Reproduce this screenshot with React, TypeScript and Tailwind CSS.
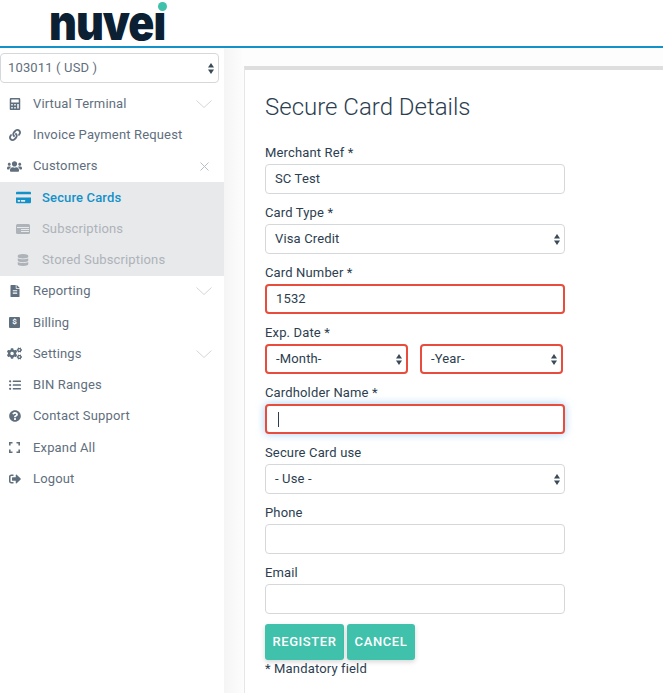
import { ReactNode } from "react";
import {
  FaCalculator,
  FaLink,
  FaUsers,
  FaCreditCard,
  FaDatabase,
  FaFileAlt,
  FaCogs,
  FaQuestionCircle,
  FaSignOutAlt,
  FaListUl,
} from "react-icons/fa";

function Chevron() {
  return (
    <svg width="16" height="8" viewBox="0 0 16 8" fill="none" stroke="#d3d6d9" strokeWidth="1">
      <path d="M0.5 0.5L8 7.5L15.5 0.5" />
    </svg>
  );
}

function Close() {
  return (
    <svg width="9" height="9" viewBox="0 0 9 9" fill="none" stroke="#b9bec3" strokeWidth="1">
      <path d="M0.5 0.5L8.5 8.5M8.5 0.5L0.5 8.5" />
    </svg>
  );
}

function Arrows() {
  return (
    <svg width="6" height="11" viewBox="0 0 6 11" fill="#3a4a58">
      <path d="M3 0L6 4.5H0Z" />
      <path d="M3 11L0 6.5H6Z" />
    </svg>
  );
}

function BillingIcon() {
  return (
    <span className="flex h-[11px] w-[11px] items-center justify-center rounded-[1px] bg-[#5f6f7e] text-[8px] font-bold leading-none text-white">
      $
    </span>
  );
}

function ExpandIcon() {
  return (
    <svg width="11" height="11" viewBox="0 0 11 11" fill="none" stroke="#5f6f7e" strokeWidth="1.6">
      <path d="M0.8 3.5V0.8H3.5M7.5 0.8H10.2V3.5M10.2 7.5V10.2H7.5M3.5 10.2H0.8V7.5" />
    </svg>
  );
}

function SubscriptionsIcon() {
  return (
    <svg width="14" height="10" viewBox="0 0 14 10">
      <rect width="14" height="10" rx="1.5" fill="#adb3b9" />
      <path d="M1 3.5H13M5 5.5H13M5 7.5H13" stroke="#e8e9eb" strokeWidth="1" />
    </svg>
  );
}

function NavItem({ icon, label, right }: { icon: ReactNode; label: string; right?: ReactNode }) {
  return (
    <div className="flex h-[31.25px] items-center text-[13px] text-[#5f6f7e]">
      <span className="flex w-[33px] shrink-0 justify-center pr-[4px] text-[12px]">{icon}</span>
      <span className="flex-1 tracking-[0.15px]">{label}</span>
      {right && <span className="mr-[12px] flex w-[16px] justify-center">{right}</span>}
    </div>
  );
}

function SubItem({ icon, label, active }: { icon: ReactNode; label: string; active?: boolean }) {
  return (
    <div
      className={`flex h-[31.25px] items-center text-[13px] tracking-[0.15px] ${
        active ? "font-medium text-[#1391c9]" : "text-[#adb3b9]"
      }`}
    >
      <span className="flex w-[42px] shrink-0 justify-center pl-[4px] text-[13px]">{icon}</span>
      <span>{label}</span>
    </div>
  );
}

function Label({ children }: { children: ReactNode }) {
  return <div className="flex h-[30px] items-center pt-[8px] text-[13px] tracking-[0.15px] text-[#2c3e50]">{children}</div>;
}

function Field({
  value,
  select,
  error,
  focus,
  className,
}: {
  value?: string;
  select?: boolean;
  error?: boolean;
  focus?: boolean;
  className?: string;
}) {
  return (
    <div
      className={`flex h-[30px] items-center justify-between rounded-[4px] bg-white pl-[9px] pr-[4px] text-[13px] tracking-[0.15px] text-[#2c3e50] ${
        error ? "border-2 border-[#e74c3c]" : "border border-[#d5d8da]"
      } ${focus ? "shadow-[0_0_8px_rgba(102,175,233,0.6)]" : ""} ${className ?? "w-[300px]"}`}
    >
      <span>{value}</span>
      {focus && <span className="absolute ml-[2px] h-[15px] w-[1px] bg-[#2c3e50]" />}
      {select && <Arrows />}
    </div>
  );
}

export default function App() {
  return (
    <div className="h-[693px] w-[663px] overflow-hidden bg-white font-['Roboto',sans-serif] antialiased">
      <header className="relative flex h-[48px] items-end border-b-2 border-[#1391c9] bg-white pb-[6.7px] pl-[49px]">
        <span className="origin-bottom scale-y-[1.14] font-['Inter',sans-serif] text-[43px] font-black leading-[30px] tracking-[-1px] text-[#0b2133]">
          nuvei
        </span>
        {/* covers the i's own dot, the logo has a teal one */}
        <span className="absolute left-[150px] top-0 h-[12.5px] w-[20px] bg-white" />
        <span className="absolute left-[158px] top-[2px] h-[9px] w-[9px] rounded-full bg-[#3fc1ab]" />
      </header>
      <div className="flex h-[645px]">
        <aside className="w-[224px] shrink-0 bg-white pt-[5px]">
          <div className="flex h-[30px] w-[219px] items-center justify-between rounded-[4px] border border-[#d5d8da] pl-[7px] pr-[4px] text-[13px] tracking-[0.15px] text-[#5f6f7e]">
            <span>103011 ( USD )</span>
            <Arrows />
          </div>
          <div className="mt-[5px]">
            <NavItem icon={<FaCalculator />} label="Virtual Terminal" right={<Chevron />} />
            <NavItem icon={<FaLink />} label="Invoice Payment Request" />
            <NavItem icon={<FaUsers className="text-[15px]" />} label="Customers" right={<Close />} />
            <div className="bg-[#e8e9eb]">
              <SubItem icon={<FaCreditCard className="text-[15px]" />} label="Secure Cards" active />
              <SubItem icon={<SubscriptionsIcon />} label="Subscriptions" />
              <SubItem icon={<FaDatabase className="text-[12px]" />} label="Stored Subscriptions" />
            </div>
            <NavItem icon={<FaFileAlt />} label="Reporting" right={<Chevron />} />
            <NavItem icon={<BillingIcon />} label="Billing" />
            <NavItem icon={<FaCogs className="text-[15px]" />} label="Settings" right={<Chevron />} />
            <NavItem icon={<FaListUl />} label="BIN Ranges" />
            <NavItem icon={<FaQuestionCircle />} label="Contact Support" />
            <NavItem icon={<ExpandIcon />} label="Expand All" />
            <NavItem icon={<FaSignOutAlt />} label="Logout" />
          </div>
        </aside>
        <main className="flex-1 bg-gradient-to-r from-[#f5f5f5] to-[#fdfdfd] to-[20px] pl-[20px] pt-[18px]">
          <div className="h-full border-l border-t-4 border-l-[#e6e6e6] border-t-[#dedede] bg-white pl-[20px] pt-[21px]">
            <h1 className="text-[24px] font-light leading-[32px] text-[#2c3e50]">Secure Card Details</h1>
            <div className="mt-[11px]">
              <Label>Merchant Ref *</Label>
              <Field value="SC Test" />
              <Label>Card Type *</Label>
              <Field value="Visa Credit" select />
              <Label>Card Number *</Label>
              <Field value="1532" error />
              <Label>Exp. Date *</Label>
              <div className="flex gap-[12px]">
                <Field value="-Month-" select error className="w-[143px]" />
                <Field value="-Year-" select error className="w-[143px]" />
              </div>
              <Label>Cardholder Name *</Label>
              <Field error focus />
              <Label>Secure Card use</Label>
              <Field value="- Use -" select />
              <Label>Phone</Label>
              <Field />
              <Label>Email</Label>
              <Field />
            </div>
            <div className="mt-[10px] flex gap-[3px]">
              <button className="h-[36px] w-[79px] rounded-[3px] bg-[#3fc1ab] text-[13px] font-medium tracking-[0.6px] text-white shadow-[0_2px_5px_rgba(0,0,0,0.16)]">
                REGISTER
              </button>
              <button className="h-[36px] w-[68px] rounded-[3px] bg-[#3fc1ab] text-[13px] font-medium tracking-[0.6px] text-white shadow-[0_2px_5px_rgba(0,0,0,0.16)]">
                CANCEL
              </button>
            </div>
            <p className="text-[13px] leading-[17px] tracking-[0.15px] text-[#2c3e50]">* Mandatory field</p>
          </div>
        </main>
      </div>
    </div>
  );
}
